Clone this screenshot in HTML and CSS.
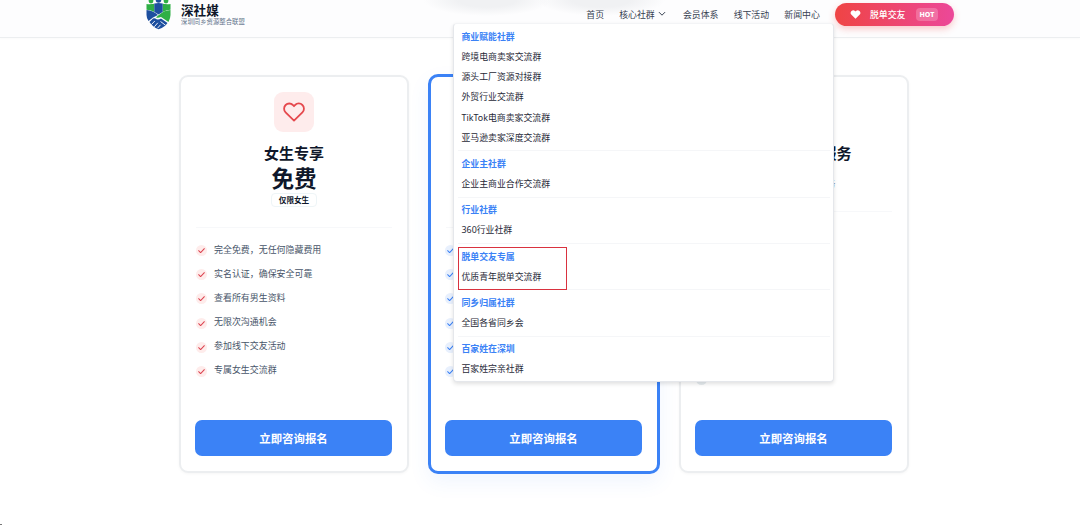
FILE: index.html
```html
<!DOCTYPE html>
<html lang="zh-CN">
<head>
    <meta charset="UTF-8">
    <meta name="viewport" content="width=device-width, initial-scale=1.0">
    <title>深社媒</title>
    <link rel="stylesheet" href="styles.css">
</head>
<body>
    <svg class="sprite" width="0" height="0">
        <symbol id="check" viewBox="0 0 12 12">
            <path d="M2.2 6.3 4.8 8.7 9.8 3.6" fill="none" stroke="currentColor" stroke-width="1.4" stroke-linecap="round" stroke-linejoin="round"/>
        </symbol>
    </svg>

    <!-- Header -->
    <header class="header">
        <div class="logo">
            <svg class="logo-icon" width="27" height="30" viewBox="0 0 27 30">
                <!-- people -->
                <circle cx="6" cy="1" r="2.4" fill="#2faf45"/>
                <circle cx="21" cy="1" r="2.4" fill="#2faf45"/>
                <path d="M1.500 4 Q5 4.500 9.300 3.800 V12 Q5 9.800 1.500 9.800Z" fill="#2faf45"/>
                <path d="M25.500 4 Q22 4.500 17.700 3.800 V12 Q22 9.800 25.500 9.800Z" fill="#2faf45"/>
                <circle cx="13.500" cy="0" r="2.8" fill="#1d4f9f"/>
                <path d="M9.300 3.500 Q13.500 2.500 17.700 3.500 V12 L13.500 14.500 L9.300 12Z" fill="#1d4f9f"/>
                <!-- shield halves and hands -->
                <path d="M1.500 10 Q8 10.300 13 15 L8 17.500 L3.500 21 Q1.500 18 1.500 15Z" fill="#1d4f9f"/>
                <path d="M25.500 10 Q19 10.300 14.500 14.500 L11 17.200 Q12.500 18.500 16 17 L23.500 22 Q25.500 18 25.500 15Z" fill="#2faf45"/>
                <path d="M4.500 22 L8 18.600 Q10 17.800 11.500 19.300 Q14 20 16 18.500 L22.500 23 L20.500 25.500 Q17.500 28 13.500 29.200 Q7.500 27 4.500 22Z" fill="#1d4f9f"/>
                <path d="M6.500 24.500 L9.800 21 M9.300 26.800 L12.800 22.800 M12.500 28.200 L15.500 24.800 M15.500 21.500 L20.500 25.200" fill="none" stroke="#fff" stroke-width="0.9"/>
            </svg>
            <div class="logo-text">
                <div class="logo-name">深社媒</div>
                <div class="logo-slogan">深圳同乡资源整合联盟</div>
            </div>
        </div>
        <nav class="nav">
            <a>首页</a>
            <a class="nav-open">核心社群
                <svg width="8" height="6" viewBox="0 0 8 6"><path d="M1.2 1.4 4 4.2 6.8 1.4" fill="none" stroke="currentColor" stroke-linecap="round"/></svg>
            </a>
            <a>会员体系</a>
            <a>线下活动</a>
            <a>新闻中心</a>
            <a class="nav-cta">
                <svg width="11" height="11" viewBox="0 0 24 24"><path d="M20.8 4.600a5.500 5.500 0 0 0-7.800 0L12 5.700l-1-1.100a5.500 5.500 0 0 0-7.800 7.800L12 21.200l8.800-8.800a5.500 5.500 0 0 0 0-7.800Z" fill="#fff"/></svg>
                <span>脱单交友</span>
                <span class="hot">HOT</span>
            </a>
        </nav>

        <!-- Dropdown of the groups menu -->
        <div class="dropdown">
            <div class="group">
                <h4>商业赋能社群</h4>
                <a>跨境电商卖家交流群</a>
                <a>源头工厂资源对接群</a>
                <a>外贸行业交流群</a>
                <a>TikTok电商卖家交流群</a>
                <a>亚马逊卖家深度交流群</a>
            </div>
            <div class="group">
                <h4>企业主社群</h4>
                <a>企业主商业合作交流群</a>
            </div>
            <div class="group">
                <h4>行业社群</h4>
                <a>360行业社群</a>
            </div>
            <div class="group marked">
                <h4>脱单交友专属</h4>
                <a>优质青年脱单交流群</a>
            </div>
            <div class="group">
                <h4>同乡归属社群</h4>
                <a>全国各省同乡会</a>
            </div>
            <div class="group">
                <h4>百家姓在深圳</h4>
                <a>百家姓宗亲社群</a>
            </div>
        </div>
    </header>

    <!-- Plans -->
    <main class="plans">
        <section class="card red">
            <div class="card-icon">
                <svg width="24" height="24" viewBox="0 0 24 24"><path d="M20.4 5a5.100 5.100 0 0 0-7.300 0L12 6.200 10.900 5a5.100 5.100 0 0 0-7.300 7.300L12 20.600l8.400-8.300a5.100 5.100 0 0 0 0-7.300Z" fill="none" stroke="#e5484d" stroke-width="1.800" stroke-linejoin="round"/></svg>
            </div>
            <h3>女生专享</h3>
            <div class="price">免费</div>
            <div class="badge">仅限女生</div>
            <hr>
            <ul>
                <li><svg><use href="#check"/></svg>完全免费，无任何隐藏费用</li>
                <li><svg><use href="#check"/></svg>实名认证，确保安全可靠</li>
                <li><svg><use href="#check"/></svg>查看所有男生资料</li>
                <li><svg><use href="#check"/></svg>无限次沟通机会</li>
                <li><svg><use href="#check"/></svg>参加线下交友活动</li>
                <li><svg><use href="#check"/></svg>专属女生交流群</li>
            </ul>
            <button>立即咨询报名</button>
        </section>

        <section class="card blue featured">
            <div class="card-icon"></div>
            <h3></h3>
            <div class="price"></div>
            <div class="badge"></div>
            <hr>
            <ul>
                <li><svg><use href="#check"/></svg></li>
                <li><svg><use href="#check"/></svg></li>
                <li><svg><use href="#check"/></svg></li>
                <li><svg><use href="#check"/></svg></li>
                <li><svg><use href="#check"/></svg></li>
                <li><svg><use href="#check"/></svg></li>
            </ul>
            <button>立即咨询报名</button>
        </section>

        <section class="card gray">
            <div class="card-icon"></div>
            <h3>高端VIP定制服务</h3>
            <div class="note">一对一专属红娘服务</div>
            <hr>
            <ul>
                <li><svg><use href="#check"/></svg></li>
                <li><svg><use href="#check"/></svg></li>
                <li><svg><use href="#check"/></svg></li>
                <li><svg><use href="#check"/></svg></li>
                <li><svg><use href="#check"/></svg></li>
                <li><svg><use href="#check"/></svg></li>
                <li><svg><use href="#check"/></svg></li>
            </ul>
            <button>立即咨询报名</button>
        </section>
    </main>
    <div class="status-tip"></div>
</body>
</html>
```
FILE: styles.css
```css
* {
    box-sizing: border-box;
}

body {
    margin: 0;
    height: 525px;
    overflow: hidden;
    background-color: #fff;
    font-family: "Noto Sans", "Noto Sans CJK SC", sans-serif;
    color: #0f172a;
}

.sprite {
    position: absolute;
}

.header {
    position: relative;
    z-index: 10;
    display: flex;
    justify-content: space-between;
    height: 38px;
    padding: 0 126px 0 145px;
    border-bottom: 1px solid #eceef0;
    background:
        radial-gradient(ellipse 64px 16px at 487px 0, #f0f1f3 45%, transparent),
        radial-gradient(ellipse 64px 16px at 601px 0, #f0f1f3 45%, transparent),
        #fdfdfe;
    box-shadow: 0 1px 2px rgba(0, 0, 0, 0.02);
}

.logo {
    display: flex;
    gap: 9px;
}

.logo-icon {
    display: block;
}

.logo-name {
    margin-top: 3px;
    font-size: 12.6px;
    line-height: 15px;
    font-weight: 700;
}

.logo-slogan {
    font-size: 6.4px;
    line-height: 8px;
    color: #64748b;
}

.nav {
    display: flex;
    align-items: center;
    gap: 15.2px;
    height: 28px;
    font-size: 8.9px;
    color: #374151;
}

.nav-open {
    display: flex;
    align-items: center;
    gap: 3.500px;
    margin-right: 1.500px;
}

.nav-cta {
    display: flex;
    align-items: center;
    width: 119px;
    height: 23px;
    padding-left: 14.500px;
    border-radius: 12px;
    background: linear-gradient(90deg, #ef4444, #ec4899);
    box-shadow: 0 3px 7px rgba(239, 68, 68, 0.28);
    color: #fff;
    font-weight: 500;
}

.nav-cta svg {
    margin-right: 9.500px;
}

.hot {
    margin-left: 10px;
    padding: 0 4px;
    border-radius: 4px;
    background-color: rgba(255, 255, 255, 0.22);
    font-size: 7px;
    line-height: 13px;
    font-weight: 800;
}

.dropdown {
    position: absolute;
    left: 453px;
    top: 23px;
    width: 381px;
    height: 359px;
    padding: 2.8px 3.500px;
    border: 1px solid #e5e7eb;
    border-top-color: #f3f4f6;
    border-radius: 4px;
    background-color: #fff;
    box-shadow: 0 2px 4px rgba(0, 0, 0, 0.12);
    font-size: 8.9px;
    color: #1f2937;
}

.dropdown h4,
.dropdown a {
    display: block;
    margin: 0;
    padding-left: 4px;
    font-size: 8.9px;
    line-height: 20.2px;
}

.dropdown h4 {
    color: #3b82f6;
}

.group + .group {
    margin-top: 2.4px;
    padding-top: 2.500px;
    border-top: 1px solid #f5f6f8;
}

.marked {
    position: relative;
}

/* red frame around the highlighted group */
.marked::after {
    content: "";
    position: absolute;
    left: 0;
    top: 3px;
    width: 107px;
    height: 41px;
    border: 1px solid #d9323f;
}

.plans {
    display: flex;
    align-items: center;
    gap: 19px;
    width: 730px;
    margin: 36px 0 0 179px;
}

.card {
    display: flex;
    flex-direction: column;
    align-items: center;
    width: 230px;
    height: 398px;
    padding: 15px;
    border: 2px solid #eceef0;
    border-radius: 9px;
    background-color: #fff;
    box-shadow: 0 1px 3px rgba(0, 0, 0, 0.04);
}

.featured {
    width: 232px;
    height: 400px;
    border: 3px solid #3b82f6;
    border-radius: 10px;
    box-shadow: 0 8px 20px rgba(59, 130, 246, 0.08);
}

.card-icon {
    display: flex;
    flex: none;
    align-items: center;
    justify-content: center;
    width: 40px;
    height: 40px;
    border-radius: 9px;
}

.red .card-icon {
    background-color: #feecec;
}

.card h3 {
    height: 20px;
    margin: 11px 0 0;
    font-size: 15px;
    line-height: 20px;
}

.price {
    height: 30px;
    margin-top: 1px;
    font-size: 22.6px;
    line-height: 30px;
    font-weight: 700;
}

.badge {
    height: 14px;
    margin-top: -1px;
    padding: 0 7px;
    border: 1px solid #eef5f7;
    border-radius: 4px;
    font-size: 7.6px;
    line-height: 12px;
    font-weight: 600;
}

.note {
    height: 14px;
    margin-top: 14px;
    font-size: 9.2px;
    line-height: 14px;
    color: #64748b;
}

.card hr {
    width: 100%;
    height: 1px;
    margin: 20px 0 9px;
    border: 0;
    background-color: #f7f8fa;
}

.card ul {
    width: 100%;
    margin: 0;
    padding: 0;
    list-style: none;
}

.card li {
    display: flex;
    align-items: center;
    height: 24.1px;
    font-size: 8.95px;
    color: #475569;
}

.card li svg {
    width: 11px;
    height: 11px;
    margin: 3.500px 7.500px 0 -0.500px;
    padding: 1px;
    border-radius: 50%;
}

.red li svg {
    background-color: #feeceb;
    color: #dc4450;
}

.blue li svg {
    margin-left: -1px;
    background-color: #e8f0fd;
    color: #3b82f6;
}

.gray li svg {
    background-color: #e6ecef;
    color: #64748b;
}

.card button {
    width: 197px;
    height: 36px;
    flex: none;
    margin-top: auto;
    margin-right: 1px;
    padding: 0;
    border: 0;
    border-radius: 7px;
    background-color: #3b82f6;
    color: #fff;
    font-family: inherit;
    font-size: 11.4px;
    font-weight: 700;
}

.status-tip {
    position: absolute;
    left: 0;
    bottom: 0;
    width: 2px;
    height: 1px;
    background-color: #777;
}
```
